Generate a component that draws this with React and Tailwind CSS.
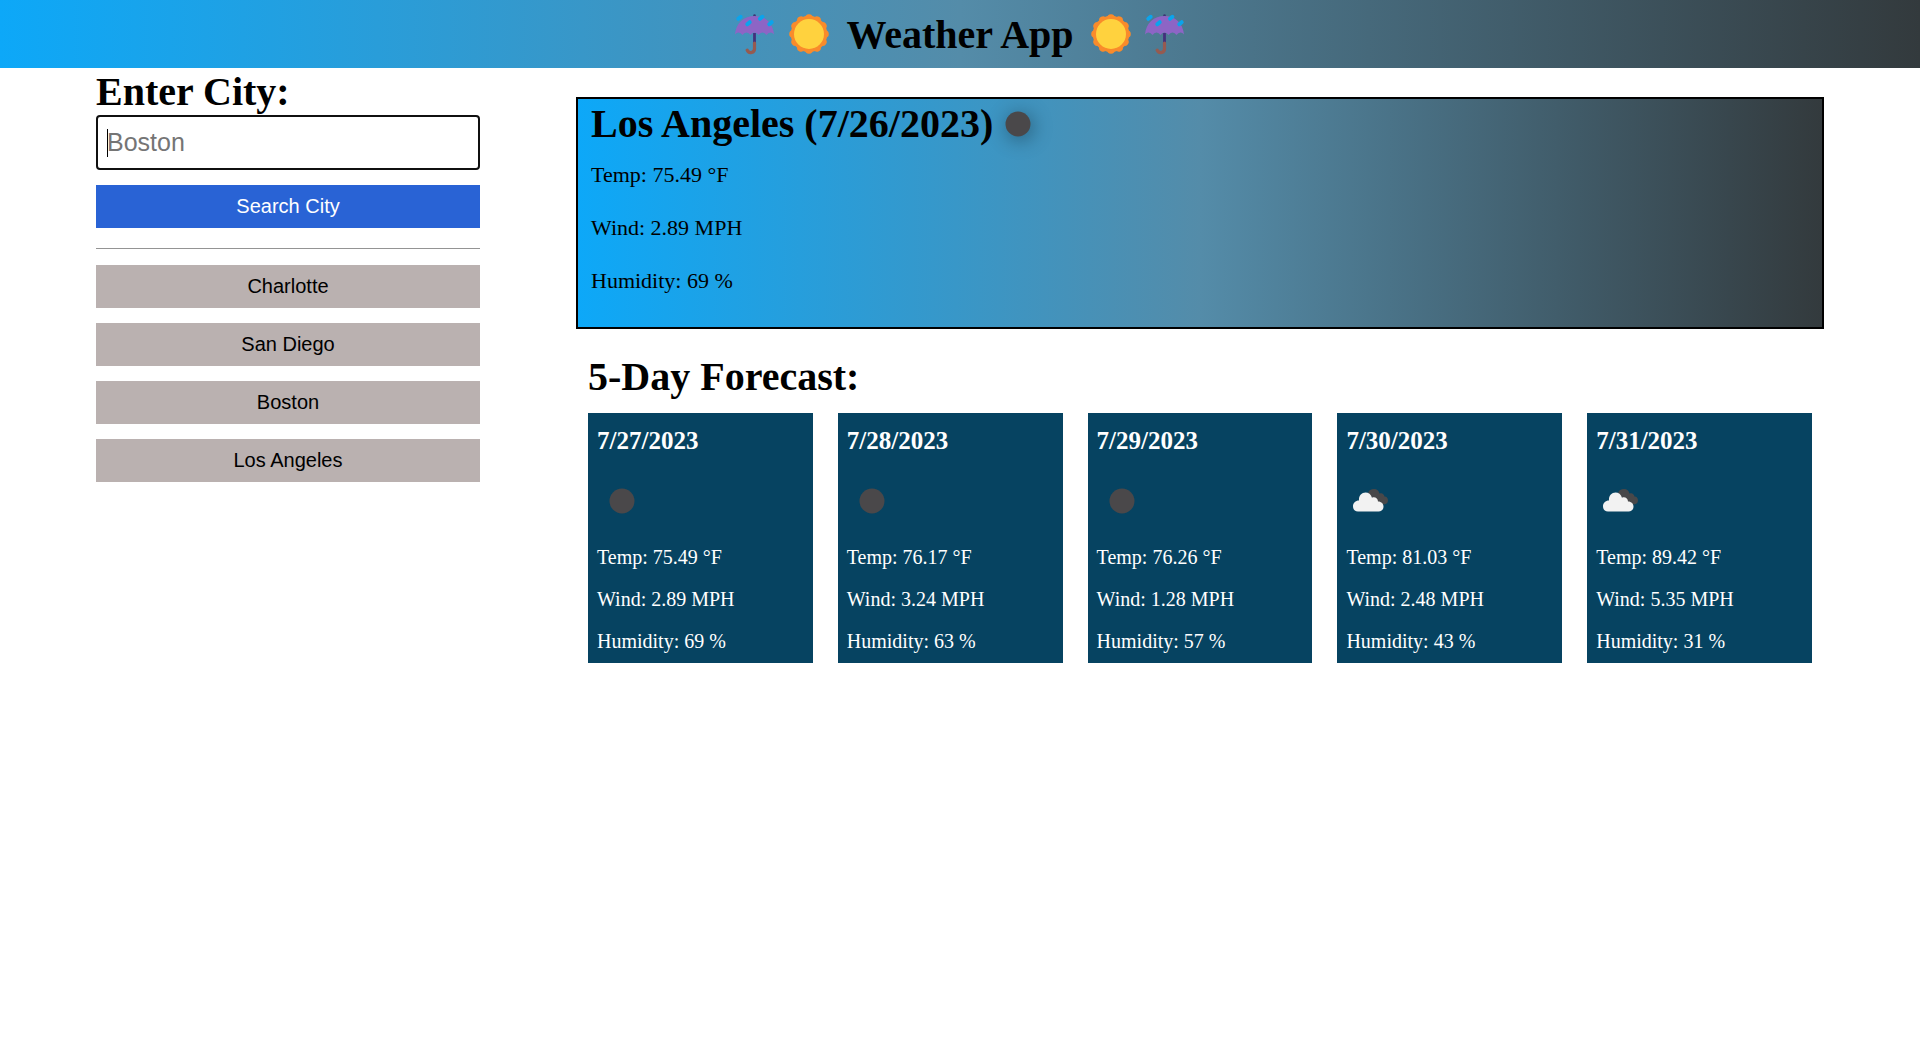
const cities = ["Charlotte", "San Diego", "Boston", "Los Angeles"];

const forecast = [
  { date: "7/27/2023", icon: "clear", temp: "75.49", wind: "2.89", humidity: 69 },
  { date: "7/28/2023", icon: "clear", temp: "76.17", wind: "3.24", humidity: 63 },
  { date: "7/29/2023", icon: "clear", temp: "76.26", wind: "1.28", humidity: 57 },
  { date: "7/30/2023", icon: "clouds", temp: "81.03", wind: "2.48", humidity: 43 },
  { date: "7/31/2023", icon: "clouds", temp: "89.42", wind: "5.35", humidity: 31 },
];

function Umbrella() {
  return (
    <svg viewBox="0 0 42 42" className="size-[42px]" aria-hidden="true">
      <path d="M20.5 2.5V6" stroke="#3d3475" strokeWidth="2.6" strokeLinecap="round" />
      <path d="M20.5 20V31" stroke="#43307c" strokeWidth="2.8" />
      <path d="M20.5 30V35.5A3.8 3.8 0 0 1 13.2 37.2" stroke="#965a50" strokeWidth="3.2" strokeLinecap="round" fill="none" />
      <path d="M1 21.5C2 10 10 3 20.5 3S39 10 40 21.5Q38.5 19.5 36.5 19.5Q34 19.5 32.5 22Q31 19.5 28.5 19.5Q26 19.5 24.5 22Q23 19.5 20.5 19.5Q18 19.5 16.5 22Q15 19.5 12.5 19.5Q10 19.5 8.5 22Q7 19.5 4.5 19.5Q2.5 19.5 1 21.5Z" fill="#8d65c5" />
      <g stroke="#0ba4ec" strokeWidth="4" strokeLinecap="round">
        <path d="M4.3 5.8l2.4-2" />
        <path d="M13.3 11.2l2.4-2" />
        <path d="M26 5.8l2.4-2" />
        <path d="M35.3 11.2l2.4-2" />
      </g>
    </svg>
  );
}

function Sun() {
  return (
    <svg viewBox="0 0 42 42" className="size-[42px]" aria-hidden="true">
      <g fill="#f98b2b">
        <circle cx="21" cy="21" r="18.2" />
        {Array.from({ length: 12 }, (_, i) => (
          <circle key={i} cx="21" cy="5" r="3.8" transform={`rotate(${i * 30} 21 21)`} />
        ))}
      </g>
      <circle cx="21" cy="21" r="15" fill="#ffd23e" />
    </svg>
  );
}

function ClearNight({ className }) {
  return (
    <svg viewBox="0 0 50 50" className={className} role="img" aria-label="Clear">
      <circle cx="25" cy="25" r="12.5" fill="#4a484a" />
    </svg>
  );
}

function Clouds({ className }) {
  return (
    <svg viewBox="0 0 50 50" className={className} role="img" aria-label="Clouds">
      <path d="M22 17C23 14 25 13 28 13C31 13 33 15 33.5 17.5C36 16.5 38 18 38.5 20.5C41 20.5 42 22.5 42 24.5C42 27 40 28.5 37 28.5L30 26Z" fill="#48484a" />
      <path d="M12 35.5C8.5 35.5 7 33 7 30C7 27 9.5 24.5 13 24.5C12.5 20 15.5 16.5 19.5 16.5C22.5 16.5 25 18.2 26 21.7C29 20.5 32 22.5 32 25.5C35.5 25.5 37.5 28 37.5 30.5C37.5 33.5 35.5 35.5 32.5 35.5Z" fill="#f2f2f2" />
    </svg>
  );
}

export default function App() {
  return (
    <div className="font-['Liberation_Serif',serif] text-black">
      <header className="flex items-center justify-center gap-3 bg-[linear-gradient(to_right,#0da8f8,#548ca9_50%,#333a3d)] py-[10px]">
        <Umbrella />
        <Sun />
        <h1 className="px-1 pt-[2px] text-[40px] leading-[46px] font-bold">Weather App</h1>
        <Sun />
        <Umbrella />
      </header>

      <main className="flex items-start">
        <aside className="mx-[5%] flex w-1/5 flex-col pt-px font-['Liberation_Sans',sans-serif] text-[20px] leading-[23px]">
          <label htmlFor="city" className="font-['Liberation_Serif',serif] text-[40px] leading-[46px] font-bold">
            Enter City:
          </label>
          <div className="relative flex items-center">
            <input
              id="city"
              type="text"
              placeholder="Boston"
              className="h-[55px] w-full rounded-[4px] border-2 border-[#101010] bg-white px-[9px] text-[25px] outline-none placeholder:text-[#757575]"
            />
            <span className="pointer-events-none absolute left-[11px] h-7 w-px bg-black" aria-hidden="true" />
          </div>
          <button type="button" className="mt-[15px] bg-[#2963d5] py-[10px] text-white">
            Search City
          </button>
          <hr className="mt-5 mb-4 border-[#949494]" />
          <div className="flex flex-col gap-[15px]">
            {cities.map((city) => (
              <button key={city} type="button" className="bg-[#bab1b0] py-[10px]">
                {city}
              </button>
            ))}
          </div>
        </aside>

        <div className="mr-[5%] min-w-0 flex-1 pt-[29px]">
          <section className="border-2 border-black bg-[linear-gradient(to_right,#0da8f8,#548ca9_50%,#333a3d)] px-[13px] pt-[2px] pb-[34px] text-[22px] leading-[25px]">
            <h2 className="flex items-center text-[40px] leading-[46px] font-bold">
              Los Angeles (7/26/2023)
              <ClearNight className="-my-[2px] size-[50px] drop-shadow-[2px_3px_10px_rgba(0,0,0,0.4)]" />
            </h2>
            <div className="mt-[15px] flex flex-col gap-7">
              <p>Temp: 75.49 °F</p>
              <p>Wind: 2.89 MPH</p>
              <p>Humidity: 69 %</p>
            </div>
          </section>

          <section className="px-3 pt-[25px]">
            <h2 className="text-[40px] leading-[46px] font-bold">5-Day Forecast:</h2>
            <div className="mt-[13px] grid grid-cols-5 gap-[25px]">
              {forecast.map((day) => (
                <article key={day.date} className="bg-[#064361] px-[9px] pt-[13px] pb-[10px] text-[20px] leading-[23px] text-white">
                  <h3 className="text-[25px] leading-[29px] font-bold">{day.date}</h3>
                  {day.icon === "clear" ? (
                    <ClearNight className="mt-[21px] mb-5 block size-[50px]" />
                  ) : (
                    <Clouds className="mt-[21px] mb-5 block size-[50px]" />
                  )}
                  <div className="flex flex-col gap-[19px]">
                    <p>Temp: {day.temp} °F</p>
                    <p>Wind: {day.wind} MPH</p>
                    <p>Humidity: {day.humidity} %</p>
                  </div>
                </article>
              ))}
            </div>
          </section>
        </div>
      </main>
    </div>
  );
}
